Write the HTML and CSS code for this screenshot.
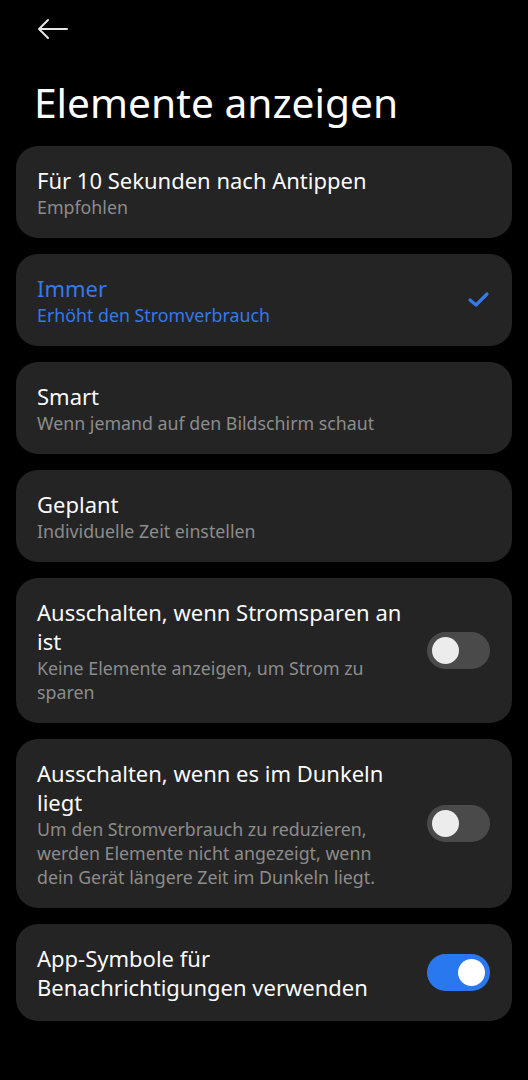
FILE: index.html
```html
<!DOCTYPE html>
<html lang="de">
<head>
    <meta charset="UTF-8">
    <meta name="viewport" content="width=device-width, initial-scale=1.0">
    <title>Elemente anzeigen</title>
    <link rel="stylesheet" href="styles.css">
</head>
<body>

    <div class="topbar">
        <button class="back-btn" aria-label="Zurück">
            <svg width="32" height="22" viewBox="0 0 32 22">
                <path d="M12 2 L3 11 L12 20 M3 11 H31" fill="none" stroke="#e6e6e6" stroke-width="2" stroke-linecap="round" stroke-linejoin="round"/>
            </svg>
        </button>
    </div>

    <h1>Elemente anzeigen</h1>

    <div class="list">
        <div class="card">
            <div class="card-text">
                <div class="card-title">Für 10 Sekunden nach Antippen</div>
                <div class="card-sub">Empfohlen</div>
            </div>
        </div>

        <div class="card selected">
            <div class="card-text">
                <div class="card-title">Immer</div>
                <div class="card-sub">Erhöht den Stromverbrauch</div>
            </div>
            <svg class="check" width="26" height="20" viewBox="0 0 26 20">
                <path d="M4 10 L10 15 L21 4" fill="none" stroke="#3579ea" stroke-width="3.2" stroke-linecap="round" stroke-linejoin="round"/>
            </svg>
        </div>

        <div class="card">
            <div class="card-text">
                <div class="card-title">Smart</div>
                <div class="card-sub">Wenn jemand auf den Bildschirm schaut</div>
            </div>
        </div>

        <div class="card">
            <div class="card-text">
                <div class="card-title">Geplant</div>
                <div class="card-sub">Individuelle Zeit einstellen</div>
            </div>
        </div>

        <div class="card">
            <div class="card-text">
                <div class="card-title">Ausschalten, wenn Stromsparen an ist</div>
                <div class="card-sub">Keine Elemente anzeigen, um Strom zu sparen</div>
            </div>
            <div class="switch"><span class="knob"></span></div>
        </div>

        <div class="card">
            <div class="card-text">
                <div class="card-title">Ausschalten, wenn es im Dunkeln liegt</div>
                <div class="card-sub">Um den Stromverbrauch zu reduzieren, werden Elemente nicht angezeigt, wenn dein Gerät längere Zeit im Dunkeln liegt.</div>
            </div>
            <div class="switch"><span class="knob"></span></div>
        </div>

        <div class="card">
            <div class="card-text">
                <div class="card-title">App-Symbole für Benachrichtigungen verwenden</div>
            </div>
            <div class="switch on"><span class="knob"></span></div>
        </div>
    </div>

</body>
</html>
```

FILE: styles.css
```css
/* Dark settings page */
body {
    font-family: "Noto Sans", "Open Sans", sans-serif;
    background-color: #000;
    color: #fff;
    margin: 0;
    padding: 0;
}

.topbar {
    height: 58px;
    padding-left: 36px;
    display: flex;
    align-items: flex-start;
}

.back-btn {
    background: none;
    border: none;
    padding: 0;
    margin-top: 18px;
    cursor: pointer;
    display: block;
}

h1 {
    margin: 0 0 0 34px;
    font-size: 40.7px;
    font-weight: 400;
    line-height: 88px;
    height: 88px;
}

.list {
    display: flex;
    flex-direction: column;
    gap: 16px;
    padding: 0 16px;
}

.card {
    background-color: #242424;
    border-radius: 22px;
    padding: 19.5px 22px 19.5px 21px;
    display: flex;
    align-items: center;
}

.card-text {
    flex: 1;
    max-width: 368px;
}

.card-title {
    font-size: 22px;
    line-height: 29px;
    color: #fafafa;
}

.card-sub {
    font-size: 17.8px;
    line-height: 24px;
    color: #8c8c8c;
}

.selected .card-title,
.selected .card-sub {
    color: #3579ea;
}

.check {
    margin-left: auto;
    margin-right: -2px;
}

.switch {
    margin-left: auto;
    width: 63px;
    height: 37px;
    border-radius: 19px;
    background-color: #4a4a4a;
    position: relative;
    flex-shrink: 0;
}

.switch .knob {
    position: absolute;
    top: 5px;
    left: 5px;
    width: 27px;
    height: 27px;
    border-radius: 50%;
    background-color: #ececec;
}

.switch.on {
    background-color: #2a78ef;
}

.switch.on .knob {
    left: 31px;
    background-color: #fff;
}
```
